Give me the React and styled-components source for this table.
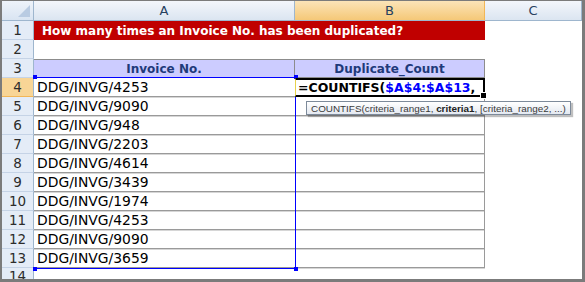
import { Fragment } from "react";
import styled, { createGlobalStyle } from "styled-components";

const GlobalStyle = createGlobalStyle`
  html, body {
    margin: 0;
    padding: 0;
    background: #ffffff;
  }
`;

const Frame = styled.div`
  box-sizing: border-box;
  width: 585px;
  height: 282px;
  overflow: hidden;
  border-style: solid;
  border-color: #7b7b7b;
  border-width: 1px 3px 3px 2px;
  background: #fff;
  font-family: "DejaVu Sans", Verdana, sans-serif;
`;

const Sheet = styled.div`
  display: grid;
  grid-template-columns: 32px 261px 190px 1fr;
  grid-template-rows: 20px repeat(14, 19px);
`;

const Corner = styled.div`
  position: relative;
  box-sizing: border-box;
  background: linear-gradient(#eef3fa, #d9e4f2);
  border-right: 1px solid #9eb6ce;
  border-bottom: 1px solid #9eb6ce;

  &::after {
    content: "";
    position: absolute;
    right: 3px;
    bottom: 3px;
    border-style: solid;
    border-width: 0 0 12px 12px;
    border-color: transparent transparent #b9cbe2 transparent;
  }
`;

const ColHead = styled.div`
  box-sizing: border-box;
  display: flex;
  align-items: center;
  justify-content: center;
  font-size: 13px;
  color: #27415f;
  background: ${(p) =>
    p.$active
      ? "linear-gradient(#fbe4b8, #f5c878)"
      : "linear-gradient(#f3f6fb, #dbe5f1)"};
  border-right: 1px solid ${(p) => (p.$active ? "#f2b656" : "#9eb6ce")};
  border-bottom: 1px solid #9eb6ce;
`;

const RowHead = styled.div`
  box-sizing: border-box;
  display: flex;
  justify-content: center;
  align-items: ${(p) => (p.$clipped ? "flex-start" : "center")};
  font-size: 13.5px;
  color: #2c2c2c;
  background: ${(p) => (p.$active ? "#f8d596" : "#e4ecf7")};
  border-right: 1px solid #9eb6ce;
  border-bottom: 1px solid ${(p) => (p.$active ? "#f2b656" : "#c5d3e6")};
  overflow: hidden;
`;

const TitleCell = styled.div`
  grid-column: span 2;
  display: flex;
  align-items: center;
  padding-left: 8px;
  background: #c00000;
  color: #ffffff;
  font-weight: bold;
  font-size: 12px;
  white-space: nowrap;
`;

const Blank = styled.div`
  background: #fff;
`;

const HeadCell = styled.div`
  box-sizing: border-box;
  display: flex;
  align-items: center;
  justify-content: center;
  background: #ccccff;
  color: #1f3a7a;
  font-weight: bold;
  font-size: 12px;
  border-top: 1px solid #8c8c8c;
  border-right: 1px solid #8c8c8c;
  border-bottom: 1px solid #8c8c8c;
`;

const DataCell = styled.div`
  position: relative;
  box-sizing: border-box;
  display: flex;
  align-items: center;
  padding-left: 3px;
  font-size: 13.9px;
  color: #000;
  white-space: nowrap;
  border-bottom: 1px solid #9a9a9a;
  box-shadow: 0 1px 0 #d6d6d6;
  border-right: ${(p) => (p.$edge ? "1px solid #9a9a9a" : "none")};
`;

const Range = styled.div`
  position: absolute;
  z-index: 3;
  left: 0;
  right: -1px;
  top: -1px;
  height: 190px;
  pointer-events: none;
  border-top: 1px solid #0000ff;
  border-right: 1px solid #0000ff;
  border-bottom: 1px solid #0000ff;
`;

const Handle = styled.span`
  position: absolute;
  width: 4px;
  height: 4px;
  background: #0000ff;
  left: ${(p) => (p.$right ? "auto" : "-1px")};
  right: ${(p) => (p.$right ? "-3px" : "auto")};
  top: ${(p) => (p.$bottom ? "auto" : "-3px")};
  bottom: ${(p) => (p.$bottom ? "-3px" : "auto")};
`;

const ActiveCell = styled.div`
  position: relative;
  z-index: 4;
  box-sizing: border-box;
  display: flex;
  align-items: center;
  padding-left: 2px;
  font-size: 12.5px;
  font-weight: bold;
  white-space: nowrap;
  background: #fff;
  border-top: 2px solid #000;
  border-right: 2px solid #000;
  border-bottom: 2px solid #000;
  border-left: 1px solid #e8d24a;
`;

const Ref = styled.span`
  color: #0000ff;
`;

const FillHandle = styled.span`
  position: absolute;
  right: -4px;
  bottom: -4px;
  width: 5px;
  height: 5px;
  background: #000;
  border: 1px solid #fff;
`;

const Tooltip = styled.div`
  position: absolute;
  left: 10px;
  top: 21px;
  height: 12px;
  display: flex;
  align-items: center;
  padding: 0 4px;
  font-family: "Liberation Sans", Arial, sans-serif;
  font-size: 9.9px;
  font-weight: normal;
  color: #3a3a3a;
  background: linear-gradient(#ffffff, #e4e9f1);
  border: 1px solid #7d8a9a;
  box-shadow: 2px 2px 1px rgba(0, 0, 0, 0.25);
  white-space: nowrap;

  b {
    color: #222;
  }
`;

const invoices = [
  "DDG/INVG/4253",
  "DDG/INVG/9090",
  "DDG/INVG/948",
  "DDG/INVG/2203",
  "DDG/INVG/4614",
  "DDG/INVG/3439",
  "DDG/INVG/1974",
  "DDG/INVG/4253",
  "DDG/INVG/9090",
  "DDG/INVG/3659",
];

export default function App() {
  return (
    <>
      <GlobalStyle />
      <Frame>
        <Sheet>
          <Corner />
          <ColHead>A</ColHead>
          <ColHead $active>B</ColHead>
          <ColHead>C</ColHead>

          <RowHead>1</RowHead>
          <TitleCell>How many times an Invoice No. has been duplicated?</TitleCell>
          <Blank />

          <RowHead>2</RowHead>
          <Blank />
          <Blank />
          <Blank />

          <RowHead>3</RowHead>
          <HeadCell>Invoice No.</HeadCell>
          <HeadCell>Duplicate_Count</HeadCell>
          <Blank />

          {invoices.map((inv, i) => (
            <Fragment key={i}>
              <RowHead $active={i === 0}>{i + 4}</RowHead>
              <DataCell>
                {inv}
                {/* range highlight for $A$4:$A$13 */}
                {i === 0 && (
                  <Range>
                    <Handle />
                    <Handle $right />
                    <Handle $bottom />
                    <Handle $right $bottom />
                  </Range>
                )}
              </DataCell>
              {i === 0 ? (
                <ActiveCell>
                  =COUNTIFS(<Ref>$A$4:$A$13</Ref>,
                  <FillHandle />
                  <Tooltip>
                    COUNTIFS(criteria_range1,&nbsp;<b>criteria1</b>, [criteria_range2, ...)
                  </Tooltip>
                </ActiveCell>
              ) : (
                <DataCell $edge />
              )}
              <Blank />
            </Fragment>
          ))}

          <RowHead $clipped>14</RowHead>
          <Blank />
          <Blank />
          <Blank />
        </Sheet>
      </Frame>
    </>
  );
}
